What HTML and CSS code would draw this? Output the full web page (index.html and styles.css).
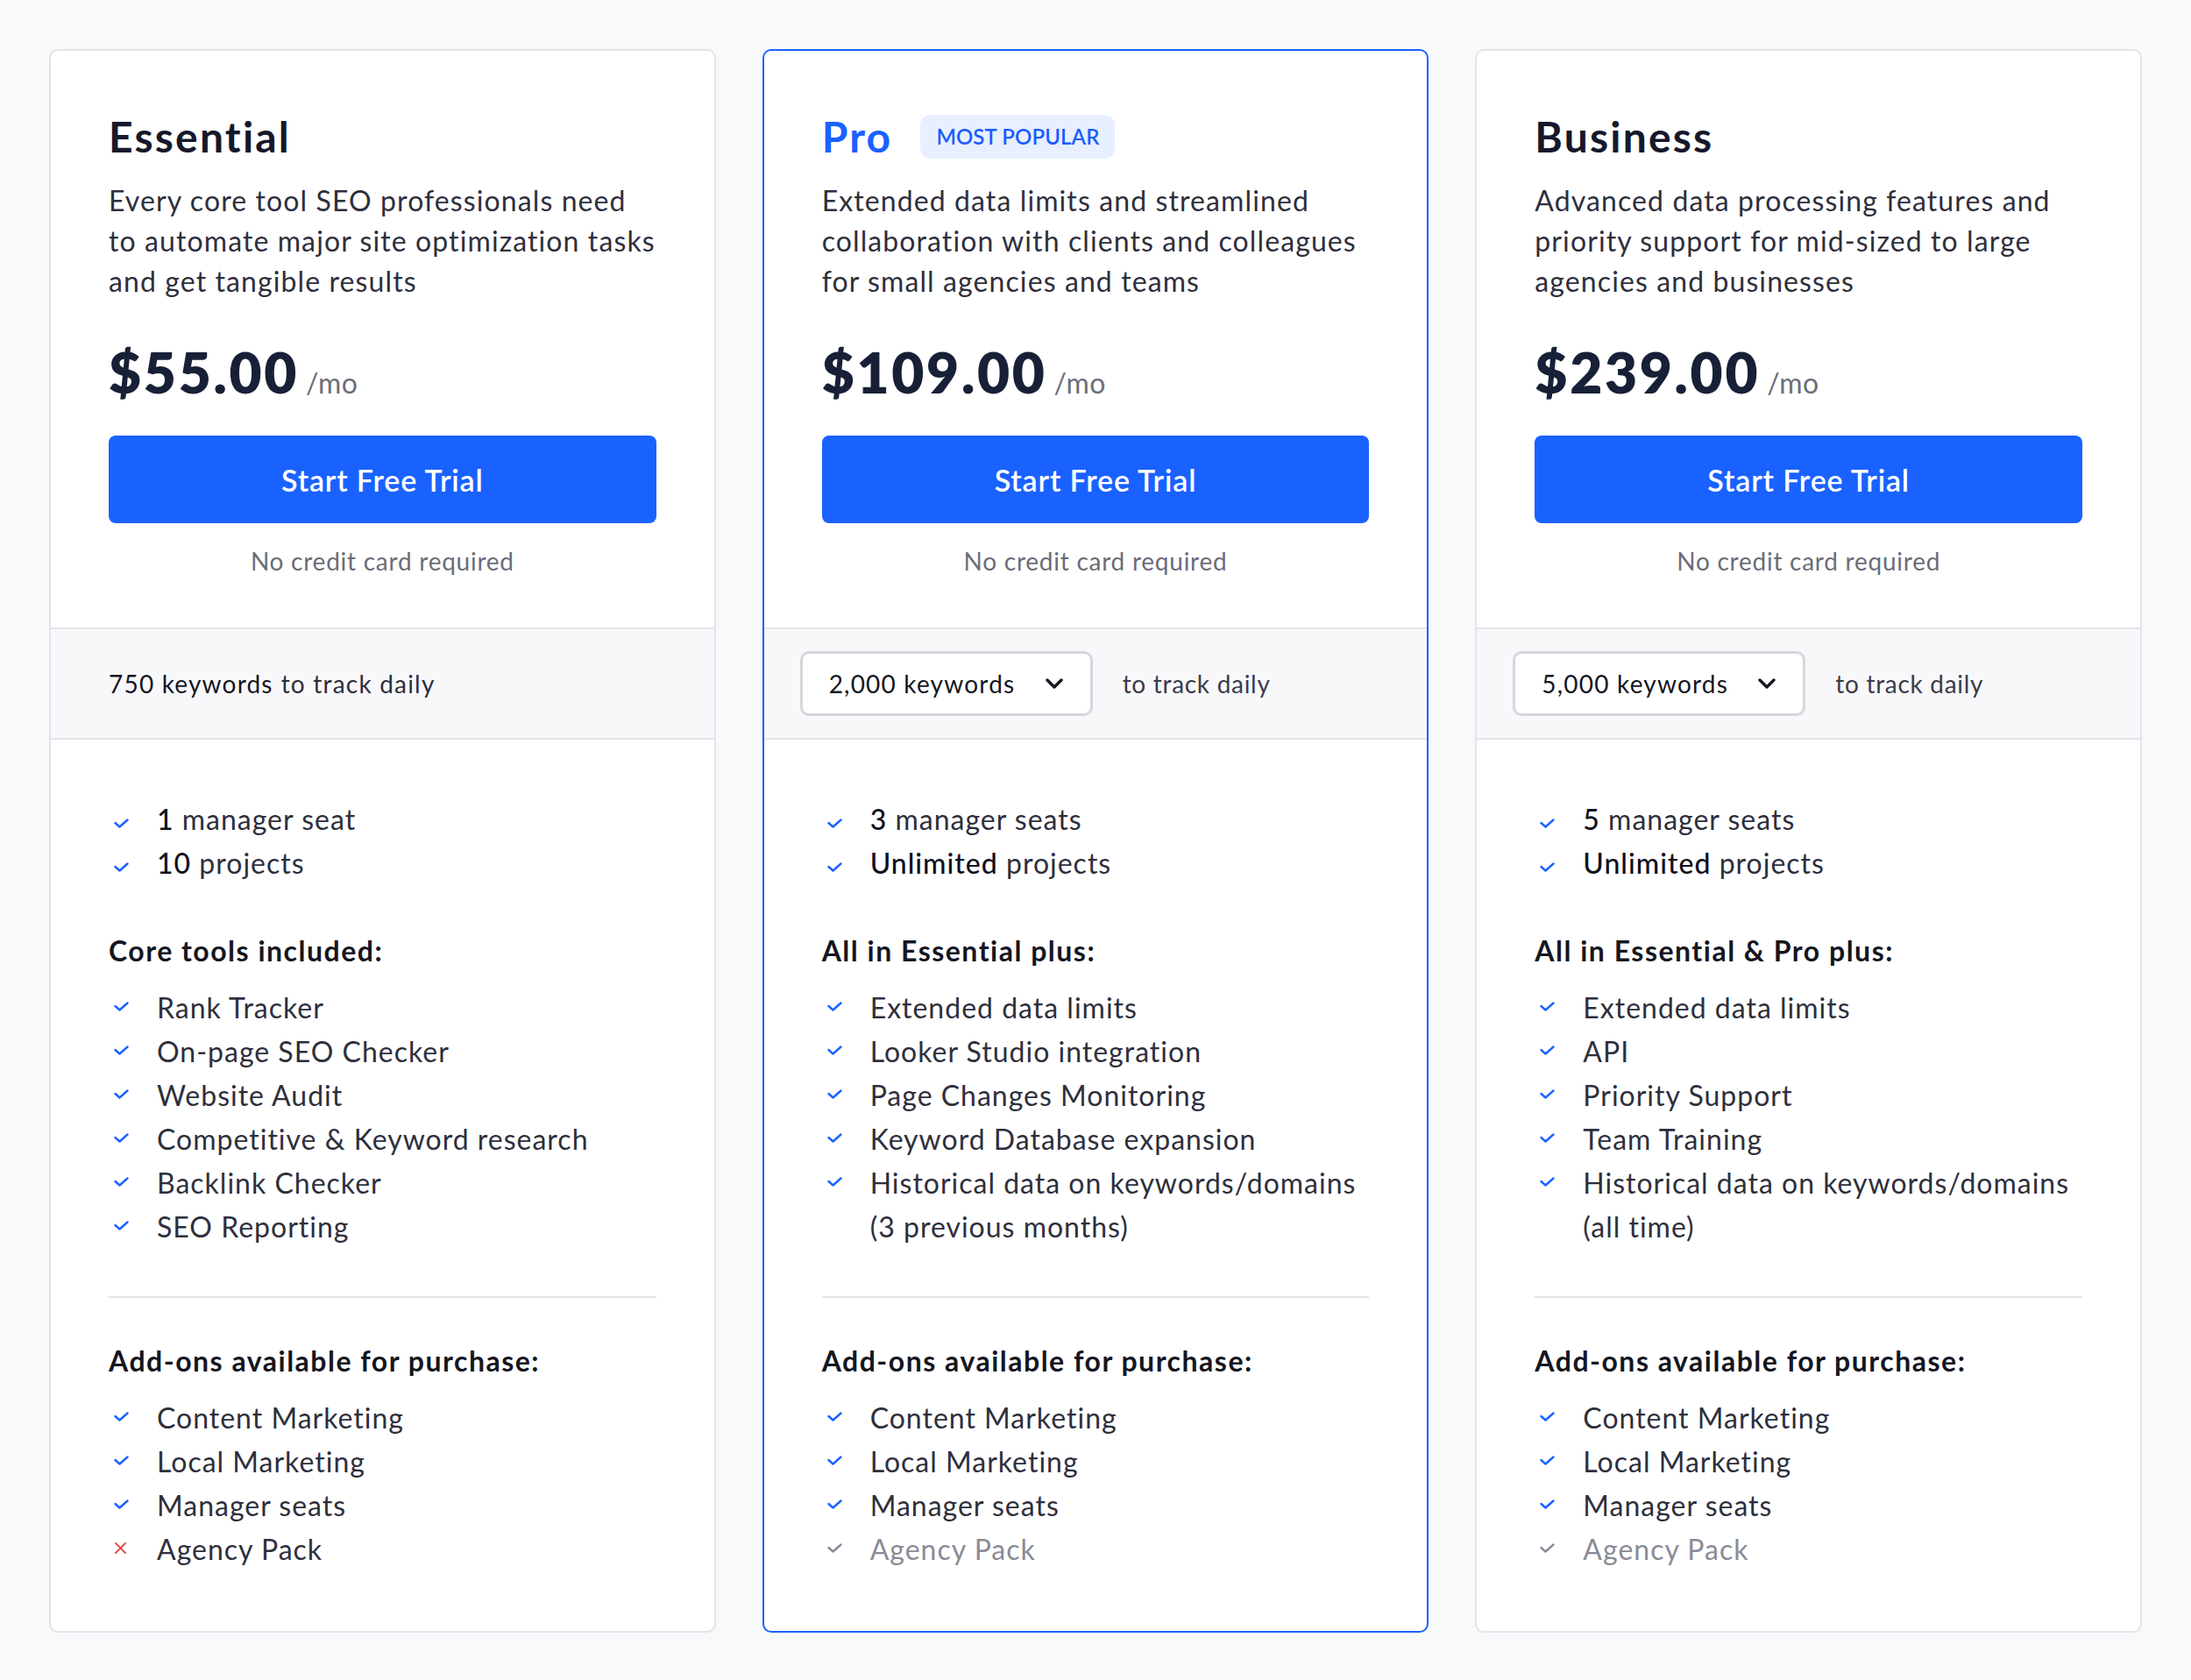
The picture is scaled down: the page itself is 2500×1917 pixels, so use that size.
FILE: index.html
```html
<!DOCTYPE html>
<html lang="en">
<head>
<meta charset="utf-8">
<title>Pricing</title>
<link rel="stylesheet" href="styles.css">
</head>
<body>
<main class="plans">

  <section class="card">
    <div class="top">
      <div class="title-row"><h2 class="name">Essential</h2></div>
      <p class="desc">Every core tool SEO professionals need<br>to automate major site optimization tasks<br>and get tangible results</p>
      <div class="price"><span class="amount">$55.00</span><span class="per">/mo</span></div>
      <a class="cta" href="#">Start Free Trial</a>
      <p class="note">No credit card required</p>
    </div>
    <div class="band band-plain"><span class="kw">750 keywords</span><span class="daily-plain">to track daily</span></div>
    <div class="features">
      <ul class="list list-quota">
        <li><span class="ic"><svg viewBox="0 0 18 12" class="check"><path d="M1.5 5 L6.5 9.5 L15.5 1.5"/></svg></span><span><b>1</b> manager seat</span></li>
        <li><span class="ic"><svg viewBox="0 0 18 12" class="check"><path d="M1.5 5 L6.5 9.5 L15.5 1.5"/></svg></span><span><b>10</b> projects</span></li>
      </ul>
      <h3 class="group">Core tools included:</h3>
      <ul class="list">
        <li><span class="ic"><svg viewBox="0 0 18 12" class="check"><path d="M1.5 5 L6.5 9.5 L15.5 1.5"/></svg></span><span>Rank Tracker</span></li>
        <li><span class="ic"><svg viewBox="0 0 18 12" class="check"><path d="M1.5 5 L6.5 9.5 L15.5 1.5"/></svg></span><span>On-page SEO Checker</span></li>
        <li><span class="ic"><svg viewBox="0 0 18 12" class="check"><path d="M1.5 5 L6.5 9.5 L15.5 1.5"/></svg></span><span>Website Audit</span></li>
        <li><span class="ic"><svg viewBox="0 0 18 12" class="check"><path d="M1.5 5 L6.5 9.5 L15.5 1.5"/></svg></span><span>Competitive &amp; Keyword research</span></li>
        <li><span class="ic"><svg viewBox="0 0 18 12" class="check"><path d="M1.5 5 L6.5 9.5 L15.5 1.5"/></svg></span><span>Backlink Checker</span></li>
        <li><span class="ic"><svg viewBox="0 0 18 12" class="check"><path d="M1.5 5 L6.5 9.5 L15.5 1.5"/></svg></span><span>SEO Reporting</span></li>
      </ul>
      <hr class="divider">
      <h3 class="group group-addons">Add-ons available for purchase:</h3>
      <ul class="list">
        <li><span class="ic"><svg viewBox="0 0 18 12" class="check"><path d="M1.5 5 L6.5 9.5 L15.5 1.5"/></svg></span><span>Content Marketing</span></li>
        <li><span class="ic"><svg viewBox="0 0 18 12" class="check"><path d="M1.5 5 L6.5 9.5 L15.5 1.5"/></svg></span><span>Local Marketing</span></li>
        <li><span class="ic"><svg viewBox="0 0 18 12" class="check"><path d="M1.5 5 L6.5 9.5 L15.5 1.5"/></svg></span><span>Manager seats</span></li>
        <li><span class="ic"><svg viewBox="0 0 16 16" class="cross"><path d="M2 2 L14 14 M14 2 L2 14"/></svg></span><span>Agency Pack</span></li>
      </ul>
    </div>
  </section>

  <section class="card card-featured">
    <div class="top">
      <div class="title-row"><h2 class="name name-pro">Pro</h2><span class="badge">MOST POPULAR</span></div>
      <p class="desc">Extended data limits and streamlined<br>collaboration with clients and colleagues<br>for small agencies and teams</p>
      <div class="price"><span class="amount">$109.00</span><span class="per">/mo</span></div>
      <a class="cta" href="#">Start Free Trial</a>
      <p class="note">No credit card required</p>
    </div>
    <div class="band">
      <div class="select"><span>2,000 keywords</span><svg viewBox="0 0 20 12" class="chev"><path d="M2 2 L10 10 L18 2"/></svg></div>
      <span class="daily">to track daily</span>
    </div>
    <div class="features">
      <ul class="list list-quota">
        <li><span class="ic"><svg viewBox="0 0 18 12" class="check"><path d="M1.5 5 L6.5 9.5 L15.5 1.5"/></svg></span><span><b>3</b> manager seats</span></li>
        <li><span class="ic"><svg viewBox="0 0 18 12" class="check"><path d="M1.5 5 L6.5 9.5 L15.5 1.5"/></svg></span><span><b>Unlimited</b> projects</span></li>
      </ul>
      <h3 class="group">All in Essential plus:</h3>
      <ul class="list">
        <li><span class="ic"><svg viewBox="0 0 18 12" class="check"><path d="M1.5 5 L6.5 9.5 L15.5 1.5"/></svg></span><span>Extended data limits</span></li>
        <li><span class="ic"><svg viewBox="0 0 18 12" class="check"><path d="M1.5 5 L6.5 9.5 L15.5 1.5"/></svg></span><span>Looker Studio integration</span></li>
        <li><span class="ic"><svg viewBox="0 0 18 12" class="check"><path d="M1.5 5 L6.5 9.5 L15.5 1.5"/></svg></span><span>Page Changes Monitoring</span></li>
        <li><span class="ic"><svg viewBox="0 0 18 12" class="check"><path d="M1.5 5 L6.5 9.5 L15.5 1.5"/></svg></span><span>Keyword Database expansion</span></li>
        <li><span class="ic"><svg viewBox="0 0 18 12" class="check"><path d="M1.5 5 L6.5 9.5 L15.5 1.5"/></svg></span><span>Historical data on keywords/domains<br>(3 previous months)</span></li>
      </ul>
      <hr class="divider">
      <h3 class="group group-addons">Add-ons available for purchase:</h3>
      <ul class="list">
        <li><span class="ic"><svg viewBox="0 0 18 12" class="check"><path d="M1.5 5 L6.5 9.5 L15.5 1.5"/></svg></span><span>Content Marketing</span></li>
        <li><span class="ic"><svg viewBox="0 0 18 12" class="check"><path d="M1.5 5 L6.5 9.5 L15.5 1.5"/></svg></span><span>Local Marketing</span></li>
        <li><span class="ic"><svg viewBox="0 0 18 12" class="check"><path d="M1.5 5 L6.5 9.5 L15.5 1.5"/></svg></span><span>Manager seats</span></li>
        <li class="muted"><span class="ic"><svg viewBox="0 0 18 12" class="check"><path d="M1.5 5 L6.5 9.5 L15.5 1.5"/></svg></span><span>Agency Pack</span></li>
      </ul>
    </div>
  </section>

  <section class="card">
    <div class="top">
      <div class="title-row"><h2 class="name">Business</h2></div>
      <p class="desc">Advanced data processing features and<br>priority support for mid-sized to large<br>agencies and businesses</p>
      <div class="price"><span class="amount">$239.00</span><span class="per">/mo</span></div>
      <a class="cta" href="#">Start Free Trial</a>
      <p class="note">No credit card required</p>
    </div>
    <div class="band">
      <div class="select"><span>5,000 keywords</span><svg viewBox="0 0 20 12" class="chev"><path d="M2 2 L10 10 L18 2"/></svg></div>
      <span class="daily">to track daily</span>
    </div>
    <div class="features">
      <ul class="list list-quota">
        <li><span class="ic"><svg viewBox="0 0 18 12" class="check"><path d="M1.5 5 L6.5 9.5 L15.5 1.5"/></svg></span><span><b>5</b> manager seats</span></li>
        <li><span class="ic"><svg viewBox="0 0 18 12" class="check"><path d="M1.5 5 L6.5 9.5 L15.5 1.5"/></svg></span><span><b>Unlimited</b> projects</span></li>
      </ul>
      <h3 class="group">All in Essential &amp; Pro plus:</h3>
      <ul class="list">
        <li><span class="ic"><svg viewBox="0 0 18 12" class="check"><path d="M1.5 5 L6.5 9.5 L15.5 1.5"/></svg></span><span>Extended data limits</span></li>
        <li><span class="ic"><svg viewBox="0 0 18 12" class="check"><path d="M1.5 5 L6.5 9.5 L15.5 1.5"/></svg></span><span>API</span></li>
        <li><span class="ic"><svg viewBox="0 0 18 12" class="check"><path d="M1.5 5 L6.5 9.5 L15.5 1.5"/></svg></span><span>Priority Support</span></li>
        <li><span class="ic"><svg viewBox="0 0 18 12" class="check"><path d="M1.5 5 L6.5 9.5 L15.5 1.5"/></svg></span><span>Team Training</span></li>
        <li><span class="ic"><svg viewBox="0 0 18 12" class="check"><path d="M1.5 5 L6.5 9.5 L15.5 1.5"/></svg></span><span>Historical data on keywords/domains<br>(all time)</span></li>
      </ul>
      <hr class="divider">
      <h3 class="group group-addons">Add-ons available for purchase:</h3>
      <ul class="list">
        <li><span class="ic"><svg viewBox="0 0 18 12" class="check"><path d="M1.5 5 L6.5 9.5 L15.5 1.5"/></svg></span><span>Content Marketing</span></li>
        <li><span class="ic"><svg viewBox="0 0 18 12" class="check"><path d="M1.5 5 L6.5 9.5 L15.5 1.5"/></svg></span><span>Local Marketing</span></li>
        <li><span class="ic"><svg viewBox="0 0 18 12" class="check"><path d="M1.5 5 L6.5 9.5 L15.5 1.5"/></svg></span><span>Manager seats</span></li>
        <li class="muted"><span class="ic"><svg viewBox="0 0 18 12" class="check"><path d="M1.5 5 L6.5 9.5 L15.5 1.5"/></svg></span><span>Agency Pack</span></li>
      </ul>
    </div>
  </section>

</main>
</body>
</html>
```

FILE: styles.css
```css
* { box-sizing: border-box; }

html, body { margin: 0; }

body {
  background: #f8f9fb;
  font-family: Lato, "Noto Sans", "Liberation Sans", sans-serif;
  color: #2e2f3c;
}

.plans {
  display: grid;
  grid-template-columns: repeat(3, 1fr);
  gap: 53px;
  padding: 56px 56px 54px;
}

.card {
  background: #fff;
  border: 2px solid #e3e4ea;
  border-radius: 10px;
  display: flex;
  flex-direction: column;
}

.card-featured { border-color: #1a62ff; }

.top {
  padding: 69px 66px 56px;
  display: flex;
  flex-direction: column;
}

.title-row {
  display: flex;
  align-items: center;
  gap: 32px;
}

.name {
  margin: 0;
  font-size: 48px;
  line-height: 57.6px;
  font-weight: 700;
  letter-spacing: 2.2px;
  color: #16182b;
}

.name-pro { color: #1a62ff; }

.badge {
  height: 50px;
  padding: 0 18px;
  display: flex;
  align-items: center;
  background: #e8efff;
  color: #1a5cff;
  border-radius: 12px;
  font-size: 24px;
  font-weight: 600;
  letter-spacing: 0.1px;
}

.desc {
  margin: 21px 0 0;
  font-size: 32px;
  line-height: 46px;
  letter-spacing: 1.1px;
  color: #2e2f3c;
}

.price {
  margin-top: 43px;
  display: flex;
  align-items: baseline;
  gap: 8px;
}

.amount {
  font-size: 64px;
  line-height: 76.8px;
  font-weight: 800;
  letter-spacing: 2.7px;
  color: #172036;
}

.per {
  font-size: 32px;
  letter-spacing: 0.4px;
  color: #6d6e7a;
}

.cta {
  margin-top: 34px;
  height: 100px;
  display: flex;
  align-items: center;
  justify-content: center;
  background: #1a62ff;
  color: #fff;
  border-radius: 8px;
  font-size: 34px;
  font-weight: 600;
  letter-spacing: 0.85px;
  text-decoration: none;
}

.note {
  margin: 23px 0 0;
  font-size: 28px;
  line-height: 40px;
  letter-spacing: 0.75px;
  color: #6b6c78;
  text-align: center;
}

.band {
  height: 128px;
  border-top: 2px solid #e3e4ea;
  border-bottom: 2px solid #e3e4ea;
  background: #f8f8fb;
  display: flex;
  align-items: center;
  padding: 0 41px;
  font-size: 28px;
  letter-spacing: 1.2px;
}

.band-plain { padding-left: 66px; }

.kw { color: #15161f; }

.daily-plain { margin-left: 9px; color: #2e2f3c; }

.select {
  width: 334px;
  height: 74px;
  border: 3px solid #d6d7de;
  border-radius: 10px;
  background: #fff;
  display: flex;
  align-items: center;
  justify-content: space-between;
  padding: 0 31px 0 30px;
  color: #15161f;
}

.chev {
  width: 20px;
  height: 12px;
  fill: none;
  stroke: #15161f;
  stroke-width: 3.4;
  stroke-linecap: round;
  stroke-linejoin: round;
}

.daily {
  margin-left: 34px;
  letter-spacing: 0.7px;
  color: #3b3c48;
}

.features {
  padding: 66px 66px 68px;
  display: flex;
  flex-direction: column;
}

.list {
  margin: 0;
  padding: 0;
  list-style: none;
}

.list li {
  display: flex;
  align-items: flex-start;
  font-size: 32px;
  line-height: 50px;
  letter-spacing: 1px;
  color: #2e2f3c;
}

.list b {
  font-weight: 500;
  color: #0f1020;
}

.ic {
  flex: 0 0 55px;
  padding-left: 6px;
  padding-top: 18px;
  display: flex;
}

.list-quota .ic { padding-top: 24px; }

.check {
  width: 18px;
  height: 12px;
  fill: none;
  stroke: #1a62ff;
  stroke-width: 2.4;
  stroke-linecap: round;
  stroke-linejoin: round;
}

.cross {
  width: 15px;
  height: 15px;
  margin-top: -2px;
  fill: none;
  stroke: #e53935;
  stroke-width: 1.8;
  stroke-linecap: round;
}

.list li.muted { color: #8a8b97; }
.muted .check { stroke: #8a8b97; }

.group {
  margin: 50px 0 15px;
  font-size: 32px;
  line-height: 50px;
  font-weight: 700;
  letter-spacing: 1.5px;
  color: #15161f;
}

.divider {
  margin: 54px 0 0;
  border: 0;
  height: 2px;
  background: #e3e4ea;
}

.group-addons { margin-top: 47px; }
```
